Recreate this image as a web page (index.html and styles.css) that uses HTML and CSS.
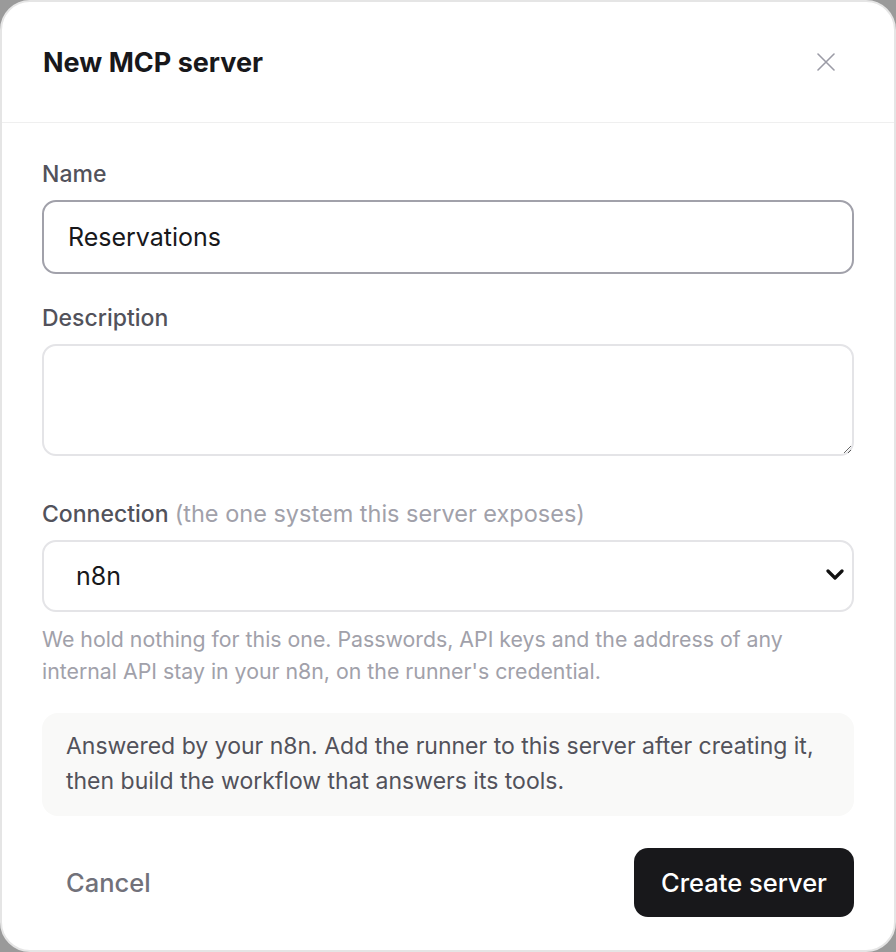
FILE: index.html
```html
<!DOCTYPE html>
<html lang="en">
<head>
<meta charset="utf-8">
<title>New MCP server</title>
<link rel="stylesheet" href="styles.css">
</head>
<body>
<div class="modal">
  <div class="header">
    <h2 class="title">New MCP server</h2>
    <button class="close" aria-label="Close">
      <svg width="18" height="18" viewBox="0 0 18 18"><path d="M1 1L17 17M17 1L1 17" stroke="#9b9ba6" stroke-width="1.6" stroke-linecap="round" fill="none"/></svg>
    </button>
  </div>
  <div class="body">
    <label class="label label-first">Name</label>
    <input class="input input-focus" type="text" value="Reservations">
    <label class="label">Description</label>
    <textarea class="input textarea"></textarea>
    <label class="label label-conn">Connection <span class="hint">(the one system this server exposes)</span></label>
    <div class="select-wrap">
      <select class="input select"><option>n8n</option></select>
      <svg class="chev" width="18" height="12" viewBox="0 0 18 12"><path d="M2 2L9 9L16 2" stroke="#111" stroke-width="3.2" fill="none" stroke-linecap="round" stroke-linejoin="round"/></svg>
    </div>
    <p class="help">We hold nothing for this one. Passwords, API keys and the address of any internal API stay in your n8n, on the runner's credential.</p>
    <div class="info">Answered by your n8n. Add the runner to this server after creating it, then build the workflow that answers its tools.</div>
    <div class="footer">
      <button class="btn-cancel">Cancel</button>
      <button class="btn-primary">Create server</button>
    </div>
  </div>
</div>
</body>
</html>
```
FILE: styles.css
```css
html, body {
  margin: 0;
  padding: 0;
}
body {
  background: #9a9a9a;
  font-family: Inter, "Noto Sans", sans-serif;
}
.modal {
  box-sizing: border-box;
  width: 896px;
  height: 952px;
  background: #fff;
  border: 2px solid #e5e5e5;
  border-radius: 30px;
  overflow: hidden;
}
.header {
  box-sizing: border-box;
  height: 121px;
  border-bottom: 1px solid #efefef;
  display: flex;
  align-items: center;
  justify-content: space-between;
  padding: 0 59px 0 41px;
}
.title {
  margin: 0;
  font-size: 27px;
  font-weight: 700;
  color: #18181b;
}
.close {
  border: 0;
  background: none;
  padding: 0;
  width: 18px;
  height: 18px;
  display: flex;
}
.body {
  display: flex;
  flex-direction: column;
  padding: 0 40px;
}
.label {
  display: block;
  font-size: 23px;
  line-height: 30px;
  font-weight: 500;
  color: #52525b;
  margin: 29px 0 11px;
}
.label-first {
  margin-top: 36px;
}
.label-conn {
  margin-top: 43px;
}
.hint {
  font-weight: 400;
  font-size: 23.5px;
  color: #a1a1aa;
}
.input {
  box-sizing: border-box;
  display: block;
  width: 812px;
  height: 74px;
  border: 2px solid #e4e4e7;
  border-radius: 14px;
  padding: 0 24px;
  font-family: Inter, "Noto Sans", sans-serif;
  font-size: 25px;
  color: #18181b;
  background: #fff;
  outline: none;
  margin: 0;
}
.input-focus {
  border-color: #a1a1aa;
}
.textarea {
  height: 112px;
  resize: vertical;
  padding: 16px 24px;
}
.select-wrap {
  position: relative;
}
.select {
  height: 72px;
  appearance: none;
  -webkit-appearance: none;
  padding-left: 32px;
}
.chev {
  position: absolute;
  right: 10px;
  top: 29px;
  pointer-events: none;
}
.help {
  margin: 11px 0 0;
  max-width: 770px;
  font-size: 21.3px;
  line-height: 32px;
  color: #a1a1aa;
}
.info {
  margin-top: 26px;
  background: #f9f9f8;
  border-radius: 16px;
  padding: 16px 24px 17px 24px;
  font-size: 23px;
  line-height: 35px;
  color: #52525b;
}
.footer {
  margin-top: 32px;
  display: flex;
  justify-content: space-between;
  align-items: center;
}
.btn-cancel {
  border: 0;
  background: none;
  padding: 0 24px;
  height: 69px;
  font-family: Inter, "Noto Sans", sans-serif;
  font-size: 25.5px;
  font-weight: 500;
  color: #71717a;
}
.btn-primary {
  border: 0;
  background: #18181b;
  color: #fff;
  height: 69px;
  width: 220px;
  border-radius: 14px;
  font-family: Inter, "Noto Sans", sans-serif;
  font-size: 25.5px;
  font-weight: 500;
}
```
